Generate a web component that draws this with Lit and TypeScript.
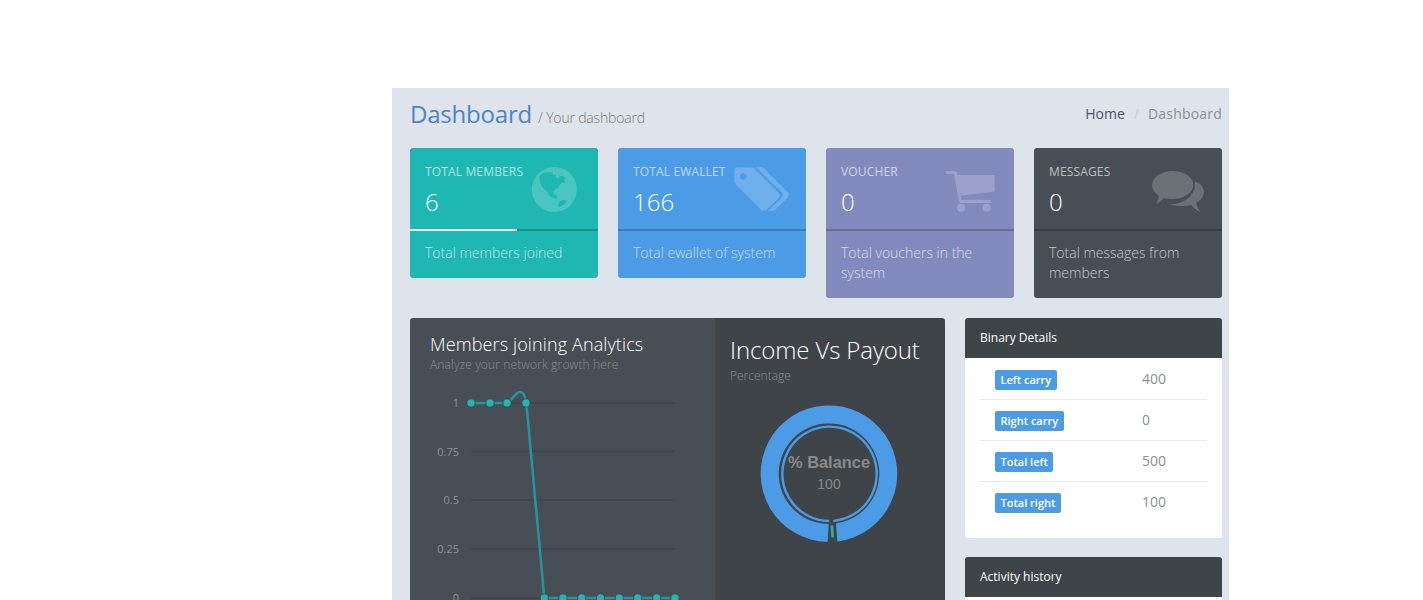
import { LitElement, html, css, svg } from "lit";
import { customElement } from "lit/decorators.js";

const icons = {
  globe: svg`<path fill-rule="evenodd" d="M103 36a67.500 67.500 0 1 0 .01 0zM58 62L68 54 80 52 96 52 100 60 108 58 106 66 116 72 120 63 128 64 138 70 133 76 137 82 124 84 118 92 115 100 106 103 101 108 100 116 110 122 113 128 106 132 96 128 88 122 82 110 72 102 64 94 60 82zM114 152L118 140 128 135 141 136 136 147 124 152 120 157z"/>`,
  tags: svg`<path fill-rule="evenodd" d="M38 37H78Q84 37 89 42L161 114Q168 122 161 130L124 164Q116 171 108 164L36 92Q29 85 28 78V47Q28 37 38 37zM55 54a10 10 0 1 0 .01 0z"/><path d="M94 37H108Q114 37 119 42L188 112Q195 120 188 128L150 165Q144 169 130 167L170 128Q176 120 170 112z"/>`,
  cart: svg`<path d="M38 47H60Q65 47 66 52L68 60H175Q179 60 179 64V106Q179 110 175 110L77 122 80 134H164Q169 134 169 139 169 144 164 144H78Q73 144 72 139L57 57H38Q33 57 33 52 33 47 38 47z"/><circle cx="78" cy="158" r="12"/><circle cx="155" cy="158" r="12"/>`,
  comments: svg`<path d="M98 48C132 48 160 67 160 90 160 113 132 132 98 132 89 132 81 131 73 129 65 137 56 143 48 147 52 139 55 131 56 122 44 114 36 103 36 90 36 67 64 48 98 48z"/><path d="M165 79C182 86 192 98 192 111 192 124 183 136 168 143 170 151 175 163 182 172 173 168 162 160 154 151 132 154 105 154 88 147 125 149 168 128 165 79z"/>`,
};

const cards = [
  { cls: "teal", head: "TOTAL MEMBERS", num: "6", foot: "Total members joined", icon: icons.globe, left: 110, progress: true },
  { cls: "blue", head: "TOTAL EWALLET", num: "166", foot: "Total ewallet of system", icon: icons.tags, left: 107 },
  { cls: "purple", head: "VOUCHER", num: "0", foot: "Total vouchers in the system", icon: icons.cart, left: 109 },
  { cls: "dark", head: "MESSAGES", num: "0", foot: "Total messages from members", icon: icons.comments, left: 106 },
];

const rows = [
  ["Left carry", "400"],
  ["Right carry", "0"],
  ["Total left", "500"],
  ["Total right", "100"],
];

const gridY: [string, number][] = [["1", 85], ["0.75", 133.5], ["0.5", 182], ["0.25", 231], ["0", 280]];
const dotX: [number, number][] = [
  [61, 85], [80, 85], [97, 85], [116, 85], [134.3, 280], [153, 280],
  [171.7, 280], [190.5, 280], [209.3, 280], [227.7, 280], [246.7, 280], [265, 280],
];

@customElement("app-root")
export class AppRoot extends LitElement {
  static styles = css`
    :host { display: block; height: 600px; overflow: hidden; font-family: "Open Sans", sans-serif; padding: 88px 0 0 392px; box-sizing: border-box; }
    .content { width: 837px; height: 512px; background: #dfe3eb; padding: 0 7px 0 18px; box-sizing: border-box; overflow: hidden; }
    .top { display: flex; justify-content: space-between; align-items: center; height: 60px; padding-bottom: 7px; padding-top: 3px; box-sizing: border-box; }
    h1 { margin: 0; font-size: 24px; font-weight: 400; color: #4a86c4; line-height: 40px; letter-spacing: -.2px; }
    h1 small { font-size: 14px; font-weight: 300; color: #777; margin-left: 0; letter-spacing: -.18px; }
    .crumbs { font-size: 14px; color: #8a8f96; display: flex; gap: 9px; margin-top: -6px; }
    .crumbs a { color: #45556a; }
    .crumbs i { font-style: normal; color: #ccc; }
    .crumbs span { letter-spacing: .2px; }
    .cards { display: grid; grid-template-columns: repeat(4, 188px); gap: 20px; align-items: start; }
    .card { position: relative; border-radius: 3px; color: #fff; }
    .teal { background: #1fb7b3; }
    .blue { background: #4b9be6; }
    .purple { background: #828abd; }
    .dark { background: #484e55; }
    .icon { position: absolute; top: 7px; width: 80px; height: 70px; fill: #fff; fill-opacity: .2; }
    .inner { height: 81px; padding: 15px 15px 0; box-sizing: border-box; }
    .head { font-size: 12px; line-height: 17px; color: rgba(255,255,255,.65); letter-spacing: .15px; }
    .num { font-size: 24px; font-weight: 300; line-height: 34px; margin-top: 5px; }
    .bar { height: 2px; background: rgba(0,0,0,.2); position: relative; }
    .bar b { display: block; height: 2px; background: #fff; }
    .foot { font-size: 14px; font-weight: 300; line-height: 20px; padding: 12px 15px 15px; color: rgba(255,255,255,.7); }
    .main { display: flex; gap: 20px; margin-top: 20px; align-items: flex-start; }
    .panel { width: 535px; height: 400px; display: flex; border-radius: 3px; overflow: hidden; }
    .pl { width: 305px; background: #484e55; padding: 15px 20px; box-sizing: border-box; position: relative; }
    .pr { width: 230px; background: #3f4448; padding: 15px; box-sizing: border-box; position: relative; }
    h2 { margin: 0; font-size: 18px; font-weight: 300; color: #fff; line-height: 22px; letter-spacing: .12px; }
    .pr h2 { font-size: 24px; line-height: 34px; letter-spacing: -.12px; }
    .sub { font-size: 12px; font-weight: 300; color: #8a8f96; line-height: 20px; letter-spacing: .13px; }
    .pr .sub { margin-top: -1px; letter-spacing: 0; }
    .chart { position: absolute; left: 0; top: 0; width: 305px; height: 400px; }
    .donut { position: absolute; left: 0; top: 0; width: 230px; height: 400px; }
    .side { width: 257px; display: flex; flex-direction: column; gap: 19px; }
    .box { border-radius: 3px; overflow: hidden; background: #fff; }
    .box h3 { margin: 0; background: #3f4448; color: #fff; font-size: 12px; font-weight: 400; height: 40px; line-height: 40px; padding: 0 15px; }
    .tbl { padding: 1px 15px 15px; }
    .row { display: grid; grid-template-columns: 162px 1fr; align-items: center; height: 41px; border-bottom: 1px solid #e6e8ec; box-sizing: border-box; color: #8a8f96; font-size: 14px; }
    .row:last-child { border-bottom: 0; }
    .value { margin-top: -2px; }
    .label { display: inline-block; vertical-align: top; margin: 1px 0 0 15px; background: #4b9be6; color: #fff; font-size: 11px; font-weight: 600; line-height: 20px; height: 20px; padding: 0 5.5px; border-radius: 2px; }
    .activity { height: 60px; }
  `;

  chart() {
    return svg`
      ${gridY.map(([t, y]) => svg`
        <line x1="61" x2="265" y1=${y} y2=${y} stroke="#3f4448" stroke-width="1.500"/>
        <text x="49" y=${y + 4} text-anchor="end" font-size="11" fill="#8f949a" font-family="Open Sans">${t}</text>
      `)}
      <path d="M61 85L97 85C102 82 106 74 110 74C115 74 116 82 117 92L134.300 280L265 280" fill="none" stroke="#2596a0" stroke-width="2.500"/>
      ${dotX.map(([x, y]) => svg`<circle cx=${x} cy=${y} r="4.100" fill="#1fb7b3" stroke="#3f4448" stroke-width=".8"/>`)}
    `;
  }

  donut() {
    return svg`
      <path d="M122.300 223.490A68.300 68.300 0 1 0 112.700 223.990L113.700 206A50.300 50.300 0 1 1 121 205.510z" fill="#4b9be6"/>
      <path d="M118.300 202.850A47.200 47.200 0 1 0 114.200 203" fill="none" stroke="#4b9be6" stroke-width="2.400"/>
      <polygon points="115.500,207.500 118.300,207.500 118.900,219.500 116.300,219.500" fill="#1fb7b3"/>
      <text x="114" y="149.700" text-anchor="middle" font-size="16.400" font-weight="700" fill="#8a8a8a" font-family="Liberation Sans">% Balance</text>
      <text x="114" y="171" text-anchor="middle" font-size="14" fill="#8a8a8a" font-family="Liberation Sans">100</text>
    `;
  }

  render() {
    return html`
      <div class="content">
        <div class="top">
          <h1>Dashboard <small>/ Your dashboard</small></h1>
          <div class="crumbs"><a>Home</a><i>/</i><span>Dashboard</span></div>
        </div>
        <div class="cards">
          ${cards.map((c) => html`
            <div class="card ${c.cls}">
              <svg class="icon" style="left:${c.left}px" viewBox="0 0 240 210">${c.icon}</svg>
              <div class="inner">
                <div class="head">${c.head}</div>
                <div class="num">${c.num}</div>
              </div>
              <div class="bar">${c.progress ? html`<b style="width:57%"></b>` : ""}</div>
              <div class="foot">${c.foot}</div>
            </div>
          `)}
        </div>
        <div class="main">
          <div class="panel">
            <div class="pl">
              <svg class="chart" viewBox="0 0 305 400">${this.chart()}</svg>
              <h2>Members joining Analytics</h2>
              <div class="sub">Analyze your network growth here</div>
            </div>
            <div class="pr">
              <svg class="donut" viewBox="0 0 230 400">${this.donut()}</svg>
              <h2>Income Vs Payout</h2>
              <div class="sub">Percentage</div>
            </div>
          </div>
          <div class="side">
            <div class="box">
              <h3>Binary Details</h3>
              <div class="tbl">
                ${rows.map(([l, v]) => html`<div class="row"><div><span class="label">${l}</span></div><div class="value">${v}</div></div>`)}
              </div>
            </div>
            <div class="box activity"><h3>Activity history</h3></div>
          </div>
        </div>
      </div>
    `;
  }
}
